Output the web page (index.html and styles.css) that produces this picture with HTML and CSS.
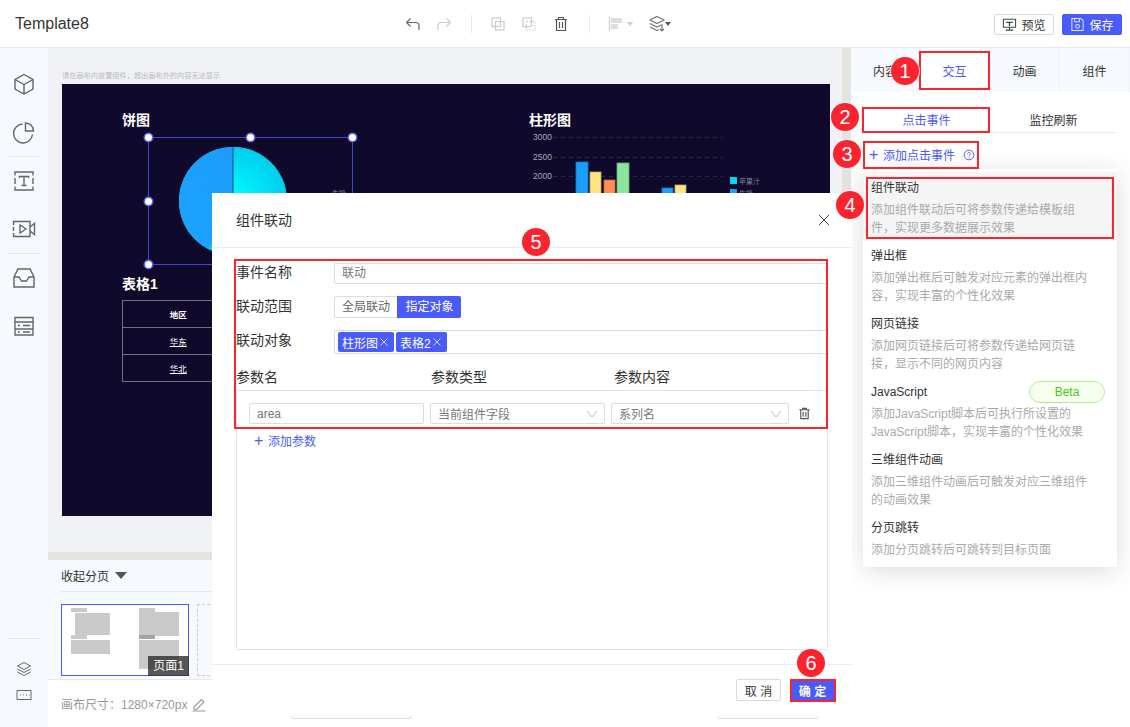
FILE: index.html
```html
<!DOCTYPE html>
<html lang="zh">
<head>
<meta charset="utf-8">
<title>Template8</title>
<link rel="stylesheet" href="styles.css">
</head>
<body>
<div class="app">
  <header class="topbar">
    <div class="doc-title">Template8</div>
    <div class="tools">
      <svg class="tool" viewBox="0 0 20 20"><path d="M3.5 8.5h9a3.5 3.5 0 0 1 3.5 3.5v4M3.5 8.500l4-4M3.500 8.500l4 4"/></svg>
      <svg class="tool off gap11" viewBox="0 0 20 20"><path d="M16.500 8.500h-9a3.500 3.500 0 0 0-3.500 3.500v4M16.500 8.500l-4-4M16.500 8.500l-4 4"/></svg>
      <span class="tool-sep sep-a"></span>
      <svg class="tool off gap16" viewBox="0 0 20 20"><rect x="4" y="4" width="8.500" height="8.500"/><rect x="7.500" y="7.500" width="8.500" height="8.500"/></svg>
      <svg class="tool off gap11" viewBox="0 0 20 20"><rect x="4" y="4" width="8.500" height="8.500"/><rect x="7.500" y="7.500" width="8.500" height="8.500" stroke-dasharray="1.500 1.500"/></svg>
      <svg class="tool dark gap12" viewBox="0 0 20 20"><path d="M4 5.500h12M7.500 5.500V3.500h5v2M5.500 5.500V16.500h9V5.500M8.500 8v6M11.500 8v6"/></svg>
      <span class="tool-sep sep-b"></span>
      <span class="tool-drop gap16">
        <svg class="tool off" viewBox="0 0 20 20"><path d="M3.500 3v14"/><path class="fill-off" d="M5 4h11v5H5zM5 10h7v5H5z"/></svg>
        <i class="caret caret-off"></i>
      </span>
      <span class="tool-drop gap-layer">
        <svg class="tool layer" viewBox="0 0 20 20"><path d="M10 2.500l7 3.500-7 3.500L3 6zM3 9.500l7 3.500 4-2M3 13l7 3.500 2-1M15 10v7M13 15l2 2 2-2"/></svg>
        <i class="caret caret-layer"></i>
      </span>
    </div>
    <div class="actions">
      <button class="btn-preview">
        <svg class="btn-icon" viewBox="0 0 16 16"><path class="stroke-dark" d="M1.500 2.500h13v8.500h-13zM8 11v3M4 14h8"/><path class="fill-dark" d="M4.500 5h7v1.500h-2.800v3H7.300v-3H4.500z"/></svg>预览
      </button>
      <button class="btn-save">
        <svg class="btn-icon" viewBox="0 0 16 16"><path class="stroke-white" d="M2 1.500h9.500l2.500 2.500v10.500H2zM5 1.500v3.500h5V1.500"/><circle class="stroke-white" cx="8" cy="10" r="2"/></svg>保存
      </button>
    </div>
  </header>

  <div class="body">
    <nav class="rail">
      <span class="rail-btn"><svg viewBox="0 0 24 24"><path d="M12 2.500l9 5v9.500l-9 5-9-5V7.500zM3 7.500l9 5 9-5M12 12.500V22"/></svg></span>
      <span class="rail-btn"><svg viewBox="0 0 24 24"><path d="M10.500 4a9.500 9.500 0 1 0 10 10.500M13.500 3v8h8a8 8 0 0 0-8-8z"/></svg></span>
      <span class="rail-sep"></span>
      <span class="rail-btn"><svg viewBox="0 0 24 24"><path d="M3 6.500V3h18v3.500M3 17.500V21h18v-3.500M3 9v6M21 9v6M7.500 9V7.500h9V9M12 7.500v9M9.500 16.500h5"/></svg></span>
      <span class="rail-btn"><svg viewBox="0 0 24 24"><path d="M1.500 8V4.500h16.500V19.500H1.500V16M1.500 10v4M18 10l4.500-3.500v11L18 14M8 8v8l6-4z"/></svg></span>
      <span class="rail-sep"></span>
      <span class="rail-btn"><svg viewBox="0 0 24 24"><path d="M6 3h12l4 8v10H2V11zM2 11h5l2.500 4h5l2.500-4h5"/></svg></span>
      <span class="rail-btn"><svg viewBox="0 0 24 24"><path d="M3 3.500h18v4.500H3zM3 8v7h18V8M3 15v6h18v-6M6 11.500h2M11 11.500h7M6 18h2M11 18h7"/></svg></span>
      <div class="rail-foot">
        <span class="rail-sep"></span>
        <svg class="foot-layers" viewBox="0 0 16 16"><path d="M8 1.500l6.500 3.500L8 8.500 1.500 5zM1.500 8L8 11.500 14.500 8M1.500 11L8 14.500 14.500 11"/></svg>
        <svg class="foot-keys" viewBox="0 0 16 12"><path d="M1 1.500h14v9H1z"/><path class="keys" d="M4 6h1M7 6h1M10 6h1M13 6h.5"/></svg>
      </div>
    </nav>

    <main class="work">
      <section class="stage">
        <p class="hint">请在画布内放置组件，超出画布外的内容无法显示</p>
        <div class="canvas">
          <h3 class="chart-title t-pie">饼图</h3>
          <h3 class="chart-title t-bar">柱形图</h3>
          <h3 class="chart-title t-table">表格1</h3>
          <svg class="charts" viewBox="0 0 768 432">
            <defs>
              <radialGradient id="gc" gradientUnits="userSpaceOnUse" cx="171" cy="117" r="54">
                <stop offset="0" stop-color="#00ffff"/><stop offset="1" stop-color="#00cdee"/>
              </radialGradient>
              <linearGradient id="gb" x1="1" y1="0" x2="0" y2="1">
                <stop offset="0" stop-color="#1d9bfb"/><stop offset="1" stop-color="#1aa4ff"/>
              </linearGradient>
            </defs>
            <circle cx="171" cy="117" r="54" fill="#10d0e0"/>
            <path d="M171 117V63a54 54 0 0 1 0 108z" fill="url(#gc)"/>
            <path d="M171 117V63a54 54 0 0 0-24 102.400z" fill="url(#gb)"/>
            <path class="pie-sep" d="M171 63V117"/>
            <path class="grid-line" d="M491 53.500H661M491 73.500H661M491 92.500H661"/>
            <text class="axis" x="471" y="56">3000</text>
            <text class="axis" x="471" y="76">2500</text>
            <text class="axis" x="471" y="95">2000</text>
            <rect class="bar b-blue" x="514" y="78" width="12" height="40"/>
            <rect class="bar b-yellow" x="528" y="88" width="11" height="30"/>
            <rect class="bar b-orange" x="542" y="96" width="11" height="22"/>
            <rect class="bar b-green" x="555" y="79" width="12" height="39"/>
            <rect class="bar b-blue" x="600" y="104" width="11" height="14"/>
            <rect class="bar b-yellow" x="613" y="101" width="11" height="17"/>
            <rect x="668" y="93" width="7" height="7" fill="#00d8f2"/>
            <rect x="668" y="105" width="7" height="7" fill="#1a9fff"/>
            <text class="legend" x="677" y="100">苹果汁</text>
            <text class="legend" x="677" y="112">牛奶</text>
            <text class="legend" x="270" y="112">牛奶</text>
          </svg>
          <div class="selection">
            <i class="handle h-tl"></i><i class="handle h-tm"></i><i class="handle h-tr"></i>
            <i class="handle h-ml"></i><i class="handle h-bl"></i>
          </div>
          <table class="data-table">
            <tr><th>地区</th><th></th></tr>
            <tr><td>华东</td><td></td></tr>
            <tr><td>华北</td><td></td></tr>
          </table>
        </div>
      </section>
      <section class="pages">
        <div class="pages-head">收起分页<i class="pages-caret"></i></div>
        <div class="pages-list">
          <div class="thumb">
            <i class="mini m1"></i><i class="mini m2"></i><i class="mini m3"></i><i class="mini m4"></i>
            <i class="mini m5"></i><i class="mini m6"></i><i class="mini m7"></i><i class="mini m8"></i>
            <span class="thumb-label">页面1</span>
          </div>
          <div class="thumb-new"></div>
        </div>
      </section>
      <footer class="status">画布尺寸：1280×720px
        <svg class="pencil" viewBox="0 0 16 16"><path d="M3 11l7.500-7.500 2.500 2.500L5.500 13.500H3zM1.500 15h13"/></svg>
      </footer>
    </main>

    <aside class="side">
      <div class="tabs">
        <span class="tab">内容</span><span class="tab active">交互</span><span class="tab">动画</span><span class="tab">组件</span>
      </div>
      <div class="subtabs"><span class="subtab active">点击事件</span><span class="subtab">监控刷新</span></div>
      <div class="add-event">
        <span class="plus">+</span>添加点击事件
        <svg class="help" viewBox="0 0 12 12"><circle cx="6" cy="6" r="4.800"/><path d="M4.600 4.800a1.400 1.400 0 1 1 2.200 1.200c-.5.300-.8.600-.8 1.200M6 8.400v.8"/></svg>
      </div>
      <div class="menu">
        <div class="menu-item hover"><div class="menu-title">组件联动</div><p class="menu-desc">添加组件联动后可将参数传递给模板组件，实现更多数据展示效果</p></div>
        <div class="menu-item"><div class="menu-title">弹出框</div><p class="menu-desc">添加弹出框后可触发对应元素的弹出框内容，实现丰富的个性化效果</p></div>
        <div class="menu-item"><div class="menu-title">网页链接</div><p class="menu-desc">添加网页链接后可将参数传递给网页链接，显示不同的网页内容</p></div>
        <div class="menu-item"><div class="menu-title">JavaScript<span class="beta">Beta</span></div><p class="menu-desc">添加JavaScript脚本后可执行所设置的JavaScript脚本，实现丰富的个性化效果</p></div>
        <div class="menu-item"><div class="menu-title">三维组件动画</div><p class="menu-desc">添加三维组件动画后可触发对应三维组件的动画效果</p></div>
        <div class="menu-item"><div class="menu-title">分页跳转</div><p class="menu-desc">添加分页跳转后可跳转到目标页面</p></div>
      </div>
    </aside>
  </div>

  <div class="modal">
    <div class="modal-head">
      <span class="modal-title">组件联动</span>
      <svg class="close" viewBox="0 0 12 12"><path d="M1 1l10 10M11 1L1 11"/></svg>
    </div>
    <div class="modal-body">
      <div class="row row-name"><label>事件名称</label><div class="field">联动</div></div>
      <div class="row row-range"><label>联动范围</label>
        <div class="seg"><span class="seg-item">全局联动</span><span class="seg-item on">指定对象</span></div>
      </div>
      <div class="row row-target"><label>联动对象</label>
        <div class="tags">
          <span class="tag">柱形图<svg class="tag-x" viewBox="0 0 8 8"><path d="M.5.500l7 7M7.500.500l-7 7"/></svg></span>
          <span class="tag">表格2<svg class="tag-x" viewBox="0 0 8 8"><path d="M.5.500l7 7M7.500.500l-7 7"/></svg></span>
        </div>
      </div>
      <div class="param-head"><span>参数名</span><span>参数类型</span><span>参数内容</span></div>
      <div class="param-box">
        <div class="param-row">
          <div class="cell c-name">area</div>
          <div class="cell c-type">当前组件字段<svg class="chev" viewBox="0 0 12 8"><path d="M1 1l5 6 5-6"/></svg></div>
          <div class="cell c-value">系列名<svg class="chev" viewBox="0 0 12 8"><path d="M1 1l5 6 5-6"/></svg></div>
          <svg class="trash" viewBox="0 0 14 14"><path d="M1.500 3h11M5 3V1.500h4V3M3 3v9.500h8V3M5.500 5.500v5M8.500 5.500v5"/></svg>
        </div>
        <div class="add-param"><span class="plus">+</span>添加参数</div>
      </div>
    </div>
    <div class="modal-foot">
      <button class="btn-cancel">取 消</button>
      <button class="btn-ok">确 定</button>
    </div>
    <i class="ghost ghost-a"></i>
    <i class="ghost ghost-b"></i>
  </div>

  <div class="note-box nb1"></div><div class="note-box nb2"></div><div class="note-box nb3"></div>
  <div class="note-box nb4"></div><div class="note-box nb5"></div><div class="note-box nb6"></div>
  <span class="mark mk1">1</span><span class="mark mk2">2</span><span class="mark mk3">3</span>
  <span class="mark mk4">4</span><span class="mark mk5">5</span><span class="mark mk6">6</span>
</div>
</body>
</html>
```

FILE: styles.css
```css
* { box-sizing: border-box; }
html, body { margin: 0; padding: 0; background: #fff; }
body { font-family: "Liberation Sans", "Noto Sans CJK SC", sans-serif; font-size: 12px; color: #333; }
p, h3 { margin: 0; }
i { font-style: normal; }
button { font-family: inherit; cursor: pointer; }

.app { position: relative; width: 1130px; height: 727px; overflow: hidden; display: flex; flex-direction: column; }

/* top bar */
.topbar { flex: none; height: 48px; border-bottom: 1px solid #e6e8ec; display: flex; align-items: center; background: #fff; }
.doc-title { width: 403px; padding-left: 15px; font-size: 16px; color: #333; }
.tools { display: flex; align-items: center; }
.tool { width: 20px; height: 20px; fill: none; stroke: #666; stroke-width: 1.2; display: block; flex: none; }
.tool.off { stroke: #ccc; }
.tool.dark { stroke: #555; }
.tool.layer { stroke: #777; }
.gap11 { margin-left: 11px; }
.gap12 { margin-left: 12px; }
.gap16 { margin-left: 16px; }
.tool-sep { width: 1px; height: 18px; background: #e8e8e8; flex: none; }
.sep-a { margin-left: 17px; }
.sep-b { margin-left: 18px; }
.tool-drop { display: flex; align-items: center; width: 29px; }
.gap-layer { margin-left: 12px; }
.fill-off { fill: #ddd; stroke: none; }
.caret { width: 0; height: 0; border: 3.5px solid transparent; border-top: 4px solid #555; border-bottom: 0; }
.caret-off { border-top-color: #ccc; margin-left: 1px; }
.caret-layer { margin-left: -2px; }
.actions { margin-left: auto; padding: 1px 8px 0 0; display: flex; gap: 8px; }
.btn-preview, .btn-save { width: 60px; height: 21px; padding: 0; border-radius: 2px; font-size: 12px; display: flex; align-items: center; justify-content: center; gap: 4px; }
.btn-preview { border: 1px solid #d9d9d9; background: #fff; color: #333; }
.btn-save { border: 1px solid #4a5bfb; background: #4a5bfb; color: #fff; }
.btn-icon { width: 15px; height: 15px; display: block; }
.stroke-dark { fill: none; stroke: #444; stroke-width: 1.1; }
.fill-dark { fill: #444; }
.stroke-white { fill: none; stroke: #dfe3ff; stroke-width: 1.1; }

/* body */
.body { flex: 1; min-height: 0; display: flex; }
.rail { flex: none; width: 48px; background: #f6f9fd; padding-top: 12px; display: flex; flex-direction: column; align-items: center; }
.rail-btn { width: 48px; height: 48px; display: flex; align-items: center; justify-content: center; flex: none; }
.rail-btn svg { width: 24px; height: 24px; fill: none; stroke: #666; stroke-width: 1.4; }
.rail-sep { display: block; width: 32px; height: 1px; background: #e6e8ec; flex: none; }
.rail-foot { margin-top: auto; padding-bottom: 26px; display: flex; flex-direction: column; align-items: center; }
.foot-layers { width: 16px; height: 16px; margin-top: 22px; fill: none; stroke: #666; stroke-width: 1; display: block; }
.foot-keys { width: 16px; height: 12px; margin-top: 12px; fill: none; stroke: #666; stroke-width: 1; display: block; }
.keys { stroke-dasharray: 1 1; }

.work { flex: none; width: 803px; display: flex; flex-direction: column; background: #eff1f5; border-right: 9px solid #e3e3e1; }
.stage { flex: none; height: 504px; padding: 20px 0 0 14px; }
.hint { height: 16px; line-height: 16px; font-size: 7.200px; color: #bbb; }
.canvas { position: relative; width: 768px; height: 432px; background: #0f0a2b; overflow: hidden; }
.chart-title { position: absolute; font-size: 14px; line-height: 20px; font-weight: 700; color: #fff; }
.t-pie { left: 60px; top: 26px; }
.t-bar { left: 467px; top: 26px; }
.t-table { left: 60px; top: 190px; }
.charts { position: absolute; left: 0; top: 0; width: 768px; height: 432px; }
.pie-sep { stroke: #0e5a6e; stroke-width: 1; }
.grid-line { stroke: #1e3040; stroke-width: 1; stroke-dasharray: 4 4; fill: none; }
.axis { font-size: 8.500px; fill: #a9a9b8; }
.legend { font-size: 7px; fill: #80809a; }
.bar { stroke-width: .8; }
.b-blue { fill: #1a9fff; stroke: #1478c4; }
.b-yellow { fill: #ffe680; stroke: #b9a860; }
.b-orange { fill: #ff8f50; stroke: #b8683c; }
.b-green { fill: #8be4a0; stroke: #68a878; }
.selection { position: absolute; left: 86px; top: 53px; width: 205px; height: 128px; border: 1px solid #4048d8; }
.handle { position: absolute; width: 7px; height: 7px; border-radius: 50%; background: #fff; box-shadow: 0 0 0 1.500px #5a60ee; }
.h-tl { left: -4px; top: -4px; }
.h-tm { left: 98px; top: -4px; }
.h-tr { right: -4px; top: -4px; }
.h-ml { left: -4px; top: 60px; }
.h-bl { left: -4px; bottom: -4px; }
.data-table { position: absolute; left: 60px; top: 216px; width: 224px; border-collapse: collapse; font-size: 8.500px; color: #fff; table-layout: fixed; }
.data-table th, .data-table td { height: 27px; border: 1px solid #70707e; text-align: center; padding: 0; }
.data-table td { text-decoration: underline; }

.pages { flex: none; height: 128px; background: #f6f9fd; border-top: 8px solid #e3e3e1; border-bottom: 1px solid #e6e8ec; padding-left: 13px; }
.pages-head { height: 32px; width: 781px; border-bottom: 1px solid #e6e8ec; display: flex; align-items: center; color: #333; font-size: 12px; }
.pages-caret { width: 0; height: 0; margin-left: 6px; border: 6px solid transparent; border-top: 7px solid #555; border-bottom: 0; }
.pages-list { display: flex; gap: 8px; padding-top: 12px; }
.thumb { position: relative; width: 128px; height: 72px; background: #fff; border: 1px solid #4a5bfb; flex: none; }
.mini { position: absolute; background: #c9c9c9; }
.m1 { left: 9px; top: 3px; width: 16px; height: 4px; }
.m2 { left: 13px; top: 8px; width: 35px; height: 22px; }
.m3 { left: 9px; top: 30px; width: 16px; height: 4px; }
.m4 { left: 9px; top: 35px; width: 39px; height: 14px; }
.m5 { left: 77px; top: 3px; width: 16px; height: 4px; }
.m6 { left: 77px; top: 7px; width: 40px; height: 24px; }
.m7 { left: 77px; top: 30px; width: 16px; height: 4px; background: #a5a5a5; }
.m8 { left: 77px; top: 35px; width: 40px; height: 29px; }
.thumb-label { position: absolute; right: -1px; bottom: -1px; width: 41px; height: 20px; line-height: 20px; text-align: center; background: rgba(50,50,50,.82); color: #fff; font-size: 12px; }
.thumb-new { width: 128px; height: 72px; border: 1px dashed #ccc; flex: none; }
.status { flex: 1; background: #fff; padding-left: 13px; display: flex; align-items: center; gap: 4px; color: #999; font-size: 12px; }
.pencil { width: 16px; height: 16px; fill: none; stroke: #999; stroke-width: 1.100; }

/* right panel */
.side { position: relative; flex: 1; min-width: 0; background: #fff; }
.tabs { display: grid; grid-template-columns: 69px 70px 70px 70px; height: 44px; background: #f6f9fd; }
.tab { display: flex; align-items: center; justify-content: center; color: #333; border-right: 1px solid #edf1f6; }
.tab.active { background: #fff; color: #4a5bfb; }
.subtabs { margin: 15px 13px 0 12px; height: 26px; display: grid; grid-template-columns: 127px 127px; border-bottom: 1px solid #e8e8e8; }
.subtab { display: flex; align-items: center; justify-content: center; color: #333; }
.subtab.active { color: #4a5bfb; }
.add-event { margin: 8px 0 0 18px; height: 27px; display: flex; align-items: center; color: #4a5bfb; }
.plus { font-size: 16px; line-height: 16px; width: 14px; }
.help { width: 12px; height: 12px; margin-left: 8px; fill: none; stroke: #4a5bfb; stroke-width: .9; }
.menu { position: absolute; left: 12px; top: 121px; width: 254px; height: 398px; padding-top: 3px; background: #fff; border-radius: 2px; box-shadow: 0 4px 26px rgba(0,0,0,.14); }
.menu-item { height: 68px; padding: 7px 12px 0 8px; }
.menu-item.hover { background: #f5f5f5; }
.menu-title { height: 18px; line-height: 18px; color: #333; display: flex; align-items: center; justify-content: space-between; }
.menu-desc { margin-top: 4px; width: 220px; line-height: 18px; color: #aaa; }
.beta { width: 76px; height: 22px; line-height: 20px; text-align: center; border: 1px solid #b7eb8f; background: #f6ffed; color: #52c41a; border-radius: 11px; }

/* modal */
.modal { position: absolute; left: 212px; top: 193px; width: 640px; height: 534px; background: #fff; display: flex; flex-direction: column; }
.modal-head { flex: none; height: 55px; padding: 0 22px 0 24px; border-bottom: 1px solid #eceef1; display: flex; align-items: center; justify-content: space-between; color: #333; }
.modal-title { font-size: 14px; line-height: 20px; margin-bottom: 1px; }
.close { width: 12px; height: 12px; fill: none; stroke: #444; stroke-width: 1; }
.modal-body { flex: none; height: 416px; padding: 15px 24px 0; }
.row { display: flex; align-items: flex-start; }
.row label { width: 98px; flex: none; color: #333; font-size: 14px; line-height: 20px; }
.row-name label { line-height: 18px; }
.field { flex: 1; height: 21px; line-height: 19px; padding-left: 7px; border: 1px solid #ddd; border-right: 0; border-radius: 2px 0 0 2px; color: #777; }
.row-range { margin-top: 12px; }
.seg { display: flex; height: 22px; }
.seg-item { width: 63px; text-align: center; line-height: 20px; border: 1px solid #ddd; border-right: 0; color: #666; border-radius: 2px 0 0 2px; }
.seg-item.on { width: 64px; background: #4a5bfb; border-color: #4a5bfb; color: #fff; border-radius: 0 2px 2px 0; }
.row-target { margin-top: 12px; }
.tags { flex: 1; height: 24px; padding: 1px 3px; border: 1px solid #ddd; border-right: 0; border-radius: 2px 0 0 2px; display: flex; gap: 2px; }
.tag { height: 20px; padding: 0 6px 0 4px; background: #4a5bfb; color: #fff; border-radius: 2px; display: flex; align-items: center; gap: 2px; }
.tag-x { width: 8px; height: 8px; fill: none; stroke: #fff; stroke-width: .9; opacity: .85; }
.param-head { height: 36px; display: grid; grid-template-columns: 195px 183px 1fr; align-items: center; color: #333; font-size: 14px; padding-top: 8px; }
.param-box { height: 260px; border: 1px solid #e4e6ea; }
.param-row { display: flex; align-items: center; padding: 12px 0 0 12px; }
.cell { height: 21px; border: 1px solid #ddd; border-radius: 2px; padding: 0 6px 0 7px; color: #777; display: flex; align-items: center; justify-content: space-between; }
.c-name { width: 175px; }
.c-type { width: 175px; margin-left: 6px; }
.c-value { width: 178px; margin-left: 6px; }
.chev { width: 12px; height: 8px; fill: none; stroke: #bbb; stroke-width: 1; }
.trash { width: 13px; height: 13px; margin-left: 9px; fill: none; stroke: #555; stroke-width: 1.200; }
.add-param { margin: 8px 0 0 17px; color: #4a5bfb; display: flex; align-items: center; }
.modal-foot { flex: none; height: 63px; border-top: 1px solid #eceef1; display: flex; justify-content: flex-end; align-items: flex-start; gap: 9px; padding: 14px 17px 0 0; }
.btn-cancel, .btn-ok { width: 45px; height: 22px; padding: 0; border-radius: 2px; font-size: 12px; }
.btn-cancel { border: 1px solid #d9d9d9; background: #fff; color: #333; }
.btn-ok { border: 0; background: #4a5bfb; color: #fff; font-weight: 700; }
.ghost { position: absolute; top: 523px; height: 3px; border: 1px solid #dcdcdc; border-top: 0; border-radius: 0 0 2px 2px; }
.ghost-a { left: 79px; width: 120px; }
.ghost-b { left: 506px; width: 100px; }

/* annotations */
.note-box { position: absolute; border: 2px solid #fb232e; pointer-events: none; }
.nb1 { left: 919px; top: 51px; width: 71px; height: 39px; }
.nb2 { left: 862px; top: 107px; width: 128px; height: 26px; }
.nb3 { left: 863px; top: 141px; width: 116px; height: 28px; }
.nb4 { left: 866px; top: 177px; width: 248px; height: 62px; }
.nb5 { left: 234px; top: 259px; width: 594px; height: 170px; }
.nb6 { left: 790px; top: 679px; width: 46px; height: 23px; }
.mark { position: absolute; width: 28px; height: 28px; border-radius: 50%; background: #fb232e; box-shadow: 0 0 0 1px rgba(255,255,255,.6); color: #fff; font-size: 20px; line-height: 28px; text-align: center; pointer-events: none; }
.mk1 { left: 891px; top: 57px; }
.mk2 { left: 831px; top: 103px; }
.mk3 { left: 833px; top: 140px; }
.mk4 { left: 836px; top: 191px; }
.mk5 { left: 522px; top: 228px; }
.mk6 { left: 797px; top: 649px; }
```
